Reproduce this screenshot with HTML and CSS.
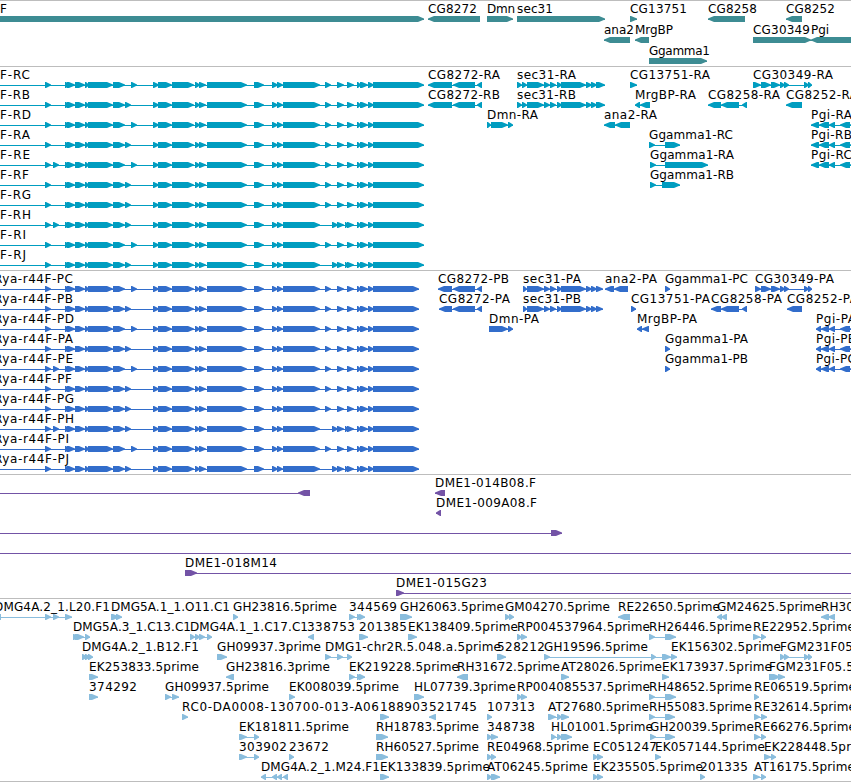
FILE: index.html
```html
<!DOCTYPE html>
<html lang="en">
<head>
    <meta charset="UTF-8">
    <meta name="viewport" content="width=device-width, initial-scale=1.0">
    <title>Genome tracks</title>
    <link rel="stylesheet" href="styles.css">
</head>
<body>

<div class="browser">
    <svg class="track genes" id="genes"></svg>
    <svg class="track transcripts" id="transcripts"></svg>
    <svg class="track cds" id="cds"></svg>
    <svg class="track clones" id="clones"></svg>
    <svg class="track ests" id="ests"></svg>
</div>

<script src="tracks.js"></script>
</body>
</html>
```

FILE: styles.css
```css
body {
    margin: 0;
    overflow: hidden;
    background: white;
    font-family: "DejaVu Sans", Verdana, sans-serif;
    font-size: 12px;
}
.browser {
    display: flex;
    flex-direction: column;
    height: 781px;
    border-bottom: 1px solid #bdbdbd;
}
.track {
    display: block;
    flex: none;
    box-sizing: border-box;
    width: 100%;
    border-top: 1px solid #bdbdbd;
    overflow: hidden;
}
.track text {
    fill: #000;
}
.genes {
    height: 66px;
    fill: #3d8c93;
}
.transcripts {
    height: 204px;
    fill: #009dc0;
}
.cds {
    height: 204px;
    fill: #326dcb;
}
.clones {
    height: 124px;
    fill: #7353a6;
}
.ests {
    height: 183px;
    fill: #8abddd;
}
```

FILE: tracks.js
```javascript
const SVG_NS = 'http://www.w3.org/2000/svg';

// whole pixel advance of every letter, digits are 8
const advance = {
    A: 8, B: 8, C: 8, D: 9, E: 8, F: 7, G: 9, H: 9, J: 4, I: 4, K: 8, L: 7, M: 10, O: 9, P: 7, R: 8, T: 7,
    a: 7, c: 7, e: 7, g: 8, h: 8, i: 3, m: 11, n: 8, p: 8, r: 5, s: 6, y: 7, '.': 4, '-': 7, '_': 6
};

// a feature is [label, label x, direction, "start-end start-end ...", line start, line end]
const exonsA = '45-51 65-70 67-75 75-85 85-89 88-113 113-125 ';
const exonsB = ' 153-159 158-172 172-194 195-200 199-206 207-247 254-264 272-278 277-283 283-320 ';
const tail1 = '325-331 337-344 347-354 357-361 360-368 368-374 373-';
const tail2 = '332-338 337-344 345-348 347-354 357-361 360-368 368-374 373-';

function rya(name, x, mid, tail, end) {
    return [name, x, 1, exonsA + mid + exonsB + tail + end, 0];
}

const sec31 = '527-544 544-550 550-556 557-562 561-586 586-592 591-597 ';
const cg30349 = '761-771 771-780 780-785 784-789 804-809 808-812';
const pgi = '829-835 840-850 850-870';

const genes = [
    [
        ['F', 0, 1, '-9-424'],
        ['CG8272', 428, -1, '428-480'],
        ['Dmn', 487, 1, '487-513'],
        ['sec31', 517, 1, '517-605'],
        ['CG13751', 630, 1, '630-637'],
        ['CG8258', 708, -1, '708-745'],
        ['CG8252', 786, -1, '786-802']
    ],
    [
        ['ana2', 604, -1, '604-630'],
        ['MrgBP', 635, -1, '635-649'],
        ['CG30349', 753, 1, '753-811'],
        ['Pgi', 811, -1, '811-870']
    ],
    [
        ['Ggamma1', 649, 1, '649-707']
    ]
];

const transcripts = [
    [
        rya('F-RC', 0, '131-137', tail1, 424),
        ['CG8272-RA', 428, -1, '428-452 453-475 477-482'],
        ['sec31-RA', 517, 1, '517-522 522-527 ' + sec31 + '596-605'],
        ['CG13751-RA', 630, 1, '630-637'],
        ['CG30349-RA', 753, 1, '753-761 ' + cg30349]
    ],
    [
        rya('F-RB', 0, '125-131', tail1, 424),
        ['CG8272-RB', 428, -1, '428-452 453-475 477-482'],
        ['sec31-RB', 517, 1, '517-522 522-527 ' + sec31 + '596-605'],
        ['MrgBP-RA', 635, -1, '635-640 640-650'],
        ['CG8258-RA', 708, -1, '708-721 721-739 742-747'],
        ['CG8252-RA', 786, -1, '786-802']
    ],
    [
        rya('F-RD', 0, '131-137', tail1, 424),
        ['Dmn-RA', 487, 1, '487-491 491-508 508-513'],
        ['ana2-RA', 604, -1, '604-615 615-630'],
        ['Pgi-RA', 811, -1, '811-819 819-829 ' + pgi]
    ],
    [
        rya('F-RA', 0, '125-131', tail1, 424),
        ['Ggamma1-RC', 649, 1, '649-655 665-680'],
        ['Pgi-RB', 811, -1, '811-819 819-829 ' + pgi]
    ],
    [
        rya('F-RE', 0, '53-59 131-137', tail1, 424),
        ['Ggamma1-RA', 650, 1, '650-656 665-708'],
        ['Pgi-RC', 811, -1, '811-819 819-829 ' + pgi]
    ],
    [
        rya('F-RF', 0, '125-131', tail1, 424),
        ['Ggamma1-RB', 650, 1, '650-656 662-680']
    ],
    [rya('F-RG', 0, '125-131', tail1, 424)],
    [rya('F-RH', 0, '53-59 125-131', tail2, 424)],
    [rya('F-RI', 0, '131-137', tail1, 424)],
    [rya('F-RJ', 0, '125-131', tail2, 424)]
];

const cds = [
    [
        rya('Rya-r44F-PC', -6, '131-137', tail1, 419),
        ['CG8272-PB', 438, -1, '438-452 453-475 477-482'],
        ['sec31-PA', 523, 1, '523-527 ' + sec31 + '596-603'],
        ['ana2-PA', 605, -1, '605-614 614-628'],
        ['Ggamma1-PC', 665, 1, '665-670'],
        ['CG30349-PA', 755, 1, '755-761 ' + cg30349]
    ],
    [
        rya('Rya-r44F-PB', -6, '125-131', tail1, 419),
        ['CG8272-PA', 439, -1, '439-452 453-475 477-482'],
        ['sec31-PB', 523, 1, '523-527 ' + sec31 + '596-603'],
        ['CG13751-PA', 631, 1, '631-636'],
        ['CG8258-PA', 711, -1, '711-721 721-739 742-747'],
        ['CG8252-PA', 787, -1, '787-802']
    ],
    [
        rya('Rya-r44F-PD', -6, '131-137', tail1, 419),
        ['Dmn-PA', 489, 1, '489-508 508-513'],
        ['MrgBP-PA', 637, -1, '637-642 642-649'],
        ['Pgi-PA', 816, -1, '816-821 821-829 ' + pgi]
    ],
    [
        rya('Rya-r44F-PA', -6, '125-131', tail1, 419),
        ['Ggamma1-PA', 665, 1, '665-670'],
        ['Pgi-PB', 816, -1, '816-821 821-829 ' + pgi]
    ],
    [
        rya('Rya-r44F-PE', -6, '53-59 131-137', tail1, 419),
        ['Ggamma1-PB', 665, 1, '665-670'],
        ['Pgi-PC', 816, -1, '816-821 821-829 ' + pgi]
    ],
    [rya('Rya-r44F-PF', -6, '125-131', tail1, 419)],
    [rya('Rya-r44F-PG', -6, '125-131', tail1, 419)],
    [rya('Rya-r44F-PH', -6, '53-59 125-131', tail2, 419)],
    [rya('Rya-r44F-PI', -6, '131-137', tail1, 419)],
    [rya('Rya-r44F-PJ', -6, '125-131', tail2, 419)]
];

const clones = [
    [
        ['', 0, -1, '298-310', 0],
        ['DME1-014B08.F', 435, -1, '435-445']
    ],
    [['DME1-009A08.F', 436, -1, '436-441']],
    [['', 0, 1, '551-562', 0]],
    [['', 0, 1, '', 0, 860]],
    [['DME1-018M14', 185, 1, '185-197', 185, 860]],
    [['DME1-015G23', 396, 1, '396-404', 396, 860]]
];

const ests = [
    [
        ['DMG4A.2_1.L20.F1', -6, 1, '0-1 45-51 53-59 65-72', 0],
        ['DMG5A.1_1.O11.C1', 111, 1, '111-119 116-122'],
        ['GH23816.5prime', 233, 1, '233-238'],
        ['344569', 349, 1, '349-355 357-362 359-365'],
        ['GH26063.5prime', 400, 1, '400-412'],
        ['GM04270.5prime', 505, 1, '505-510 509-514'],
        ['RE22650.5prime', 618, -1, '618-630'],
        ['GM24625.5prime', 717, -1, '717-722 721-727'],
        ['RH30', 821, -1, '821-829 828-835']
    ],
    [
        ['DMG5A.3_1.C13.C1', 73, 1, '73-79 75-84 85-90'],
        ['DMG4A.1_1.C17.C1', 190, 1, '190-195 195-200 199-205 207-212'],
        ['338753', 307, -1, '308-314'],
        ['201385', 359, 1, '359-368'],
        ['EK138409.5prime', 408, 1, '408-417'],
        ['RP004537964.5prime', 517, 1, '517-522 521-527'],
        ['RH26446.5prime', 649, 1, '649-655 665-676'],
        ['RE22952.5prime', 753, 1, '753-760 761-766']
    ],
    [
        ['DMG4A.2_1.B12.F1', 82, 1, '82-87 85-90 88-93'],
        ['GH09937.3prime', 217, 1, '217-227'],
        ['DMG1-chr2R.5.048.a.5prime', 325, 1, '325-331 337-343 347-352'],
        ['528212', 497, 1, '497-506'],
        ['GH19596.5prime', 544, 1, '544-550 651-656 662-671'],
        ['EK156302.5prime', 671, 1, '671-677'],
        ['FGM231F05', 780, 1, '780-785 784-789 804-809 808-812']
    ],
    [
        ['EK253833.5prime', 89, 1, '89-98'],
        ['GH23816.3prime', 226, -1, '226-234'],
        ['EK219228.5prime', 349, 1, '349-355 357-362 359-365'],
        ['RH31672.5prime', 457, -1, '457-468'],
        ['AT28026.5prime', 561, 1, '561-569'],
        ['EK173937.5prime', 662, 1, '662-669'],
        ['FGM231F05.5', 769, 1, '769-780 778-785']
    ],
    [
        ['374292', 89, 1, '89-98'],
        ['GH09937.5prime', 165, 1, '165-171 172-179'],
        ['EK008039.5prime', 289, 1, '289-295'],
        ['HL07739.3prime', 414, 1, '414-424'],
        ['RP004085537.5prime', 517, 1, '517-522 521-527'],
        ['RH48652.5prime', 649, 1, '649-655 665-676'],
        ['RE06519.5prime', 754, 1, '754-759']
    ],
    [
        ['RC0-DA0008-130700-013-A06', 182, 1, '182-188'],
        ['188903', 380, 1, '380-389'],
        ['521745', 429, -1, '429-436'],
        ['107313', 487, 1, '487-492'],
        ['AT27680.5prime', 548, 1, '548-556 557-562 561-569'],
        ['RH55083.5prime', 649, 1, '649-655 665-675'],
        ['RE32614.5prime', 754, 1, '754-760 761-767']
    ],
    [
        ['EK181811.5prime', 239, 1, '239-247 254-259'],
        ['RH18783.5prime', 376, 1, '376-388'],
        ['348738', 487, 1, '487-492 491-498'],
        ['HL01001.5prime', 551, 1, '551-556 557-562 561-572'],
        ['GH20039.5prime', 650, 1, '650-656 665-675'],
        ['RE66276.5prime', 754, 1, '754-760 761-766']
    ],
    [
        ['303902', 239, 1, '239-247 254-259'],
        ['23672', 289, 1, '289-294'],
        ['RH60527.5prime', 376, 1, '376-388'],
        ['RE04968.5prime', 487, 1, '487-492 491-496'],
        ['EC051247', 593, 1, '593-598 597-603'],
        ['EK057144.5prime', 655, 1, '655-661'],
        ['EK228448.5prime', 764, 1, '764-771 771-776']
    ],
    [
        ['DMG4A.2_1.M24.F1', 261, -1, '261-266 272-277 277-282 283-288'],
        ['EK133839.5prime', 380, 1, '380-389'],
        ['AT06245.5prime', 487, 1, '487-492 491-500'],
        ['EK235505.5prime', 593, 1, '593-598 597-603'],
        ['201335', 700, 1, '700-705'],
        ['AT16175.5prime', 754, 1, '753-760 761-766']
    ]
];

function labelWidth(label) {
    let width = 0;
    for (const c of label) {
        width += advance[c] || 8;
    }
    return width;
}

// block with a pointed end, y is its top edge
function arrow(start, end, dir, y) {
    const head = Math.min(end - start - 1, 6);
    const tail = dir > 0 ? start : end;
    const neck = dir > 0 ? end - head : start + head;
    const tip = dir > 0 ? end : start;
    return `M${tail},${y}H${neck}L${tip},${y + 2.5}v1L${neck},${y + 6}H${tail}z`;
}

function drawTrack(id, rows, pitch) {
    const svg = document.getElementById(id);
    rows.forEach((row, n) => {
        const y = 15 + n * pitch;
        for (const [label, x, dir, spans, lineStart, lineEnd] of row) {
            const blocks = (spans.match(/-?\d+-\d+/g) || []).map(s => {
                const m = s.match(/^(-?\d+)-(\d+)$/);
                return [Number(m[1]), Number(m[2])];
            });
            const from = lineStart ?? Math.min(...blocks.map(b => b[0]));
            const to = lineEnd ?? Math.max(...blocks.map(b => b[1]));
            const shapes = [`M${from},${y + 3}H${to}v1H${from}z`];
            for (const [start, end] of blocks) {
                shapes.push(arrow(start, end, dir, y));
            }
            for (const shape of shapes) {
                const path = document.createElementNS(SVG_NS, 'path');
                path.setAttribute('d', shape);
                svg.appendChild(path);
            }

            if (label) {
                const text = document.createElementNS(SVG_NS, 'text');
                text.setAttribute('x', x);
                text.setAttribute('y', y - 3);
                text.setAttribute('textLength', labelWidth(label));
                text.textContent = label;
                svg.appendChild(text);
            }
        }
    });
}

drawTrack('genes', genes, 21);
drawTrack('transcripts', transcripts, 20);
drawTrack('cds', cds, 20);
drawTrack('clones', clones, 20);
drawTrack('ests', ests, 20);
```
